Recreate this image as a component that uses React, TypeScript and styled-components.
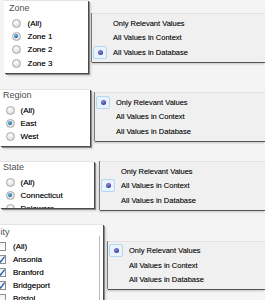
import styled, { createGlobalStyle } from "styled-components";

type FilterKind = "radio" | "check";

interface FilterRow {
  gap: number;
  title: string;
  kind: FilterKind;
  items: { label: string; on: boolean }[];
  cardWidth: number;
  cardShift: number;
  cardHeight?: number;
  padTop: number;
  padLeft: number;
  indent: number;
  itemGap: number;
  itemHeight: number;
  scroll?: boolean;
  menuGap: number;
  menuTop: number;
  selected: number;
}

const menuOptions = ["Only Relevant Values", "All Values in Context", "All Values in Database"];

const rows: FilterRow[] = [
  {
    gap: 0,
    title: "Zone",
    kind: "radio",
    items: [
      { label: "(All)", on: false },
      { label: "Zone 1", on: true },
      { label: "Zone 2", on: false },
      { label: "Zone 3", on: false },
    ],
    cardWidth: 84,
    cardShift: 4,
    padTop: 2,
    padLeft: 5,
    indent: 7.5,
    itemGap: 7,
    itemHeight: 13.3,
    menuGap: 4,
    menuTop: 13,
    selected: 2,
  },
  {
    gap: 16,
    title: "Region",
    kind: "radio",
    items: [
      { label: "(All)", on: false },
      { label: "East", on: true },
      { label: "West", on: false },
    ],
    cardWidth: 90,
    cardShift: 0,
    padTop: 0,
    padLeft: 3,
    indent: 5.5,
    itemGap: 6,
    itemHeight: 13,
    menuGap: 5,
    menuTop: 3,
    selected: 0,
  },
  {
    gap: 15,
    title: "State",
    kind: "radio",
    items: [
      { label: "(All)", on: false },
      { label: "Connecticut", on: true },
      { label: "Delaware", on: false },
    ],
    cardWidth: 94,
    cardShift: 0,
    cardHeight: 47,
    padTop: 0,
    padLeft: 3,
    indent: 5.5,
    itemGap: 6,
    itemHeight: 13,
    menuGap: 6,
    menuTop: 0,
    selected: 1,
  },
  {
    gap: 14,
    title: "City",
    kind: "check",
    items: [
      { label: "(All)", on: false },
      { label: "Ansonia", on: true },
      { label: "Branford", on: true },
      { label: "Bridgeport", on: true },
      { label: "Bristol", on: false },
    ],
    cardWidth: 112,
    cardShift: -9,
    cardHeight: 90,
    padTop: 2,
    padLeft: 3,
    indent: 6,
    itemGap: 7,
    itemHeight: 13,
    scroll: true,
    menuGap: 5,
    menuTop: 17,
    selected: 0,
  },
];

export default function App() {
  return (
    <>
      <GlobalStyle />
      <Page>
        {rows.map((row) => (
          <Row key={row.title} $gap={row.gap}>
            <Card $width={row.cardWidth} $shift={row.cardShift} $height={row.cardHeight} $padTop={row.padTop}>
              <CardBody>
                <CardTitle $padLeft={row.padLeft}>{row.title}</CardTitle>
                {row.items.map((item) => (
                  <Item key={item.label} $indent={row.indent} $gap={row.itemGap} $height={row.itemHeight}>
                    {row.kind === "radio" ? (
                      <Radio $on={item.on} />
                    ) : (
                      <Check>
                        {item.on && (
                          <svg width="9" height="9" viewBox="0 0 9 9">
                            <path d="M1.5 4.8 L3.6 7 L7.6 1.6" fill="none" stroke="#2a5fb8" strokeWidth="1.4" />
                          </svg>
                        )}
                      </Check>
                    )}
                    <ItemLabel>{item.label}</ItemLabel>
                  </Item>
                ))}
              </CardBody>
              {row.scroll && <ScrollTrack />}
            </Card>
            <Menu $gap={row.menuGap} $top={row.menuTop}>
              {menuOptions.map((opt, i) => (
                <MenuItem key={opt}>
                  <Marker $on={i === row.selected}>{i === row.selected && <Dot />}</Marker>
                  <MenuLabel>{opt}</MenuLabel>
                </MenuItem>
              ))}
            </Menu>
          </Row>
        ))}
      </Page>
    </>
  );
}

const GlobalStyle = createGlobalStyle`
  html, body {
    margin: 0;
    padding: 0;
    background: #f4f4f4;
  }
  body {
    font-family: "Liberation Sans", Arial, sans-serif;
    overflow: hidden;
  }
`;

const Page = styled.div`
  width: 265px;
  height: 300px;
  overflow: hidden;
  display: flex;
  flex-direction: column;
`;

const Row = styled.div<{ $gap: number }>`
  display: flex;
  align-items: flex-start;
  flex-shrink: 0;
  margin-top: ${(p) => p.$gap}px;
`;

const Card = styled.div<{ $width: number; $shift: number; $height?: number; $padTop: number }>`
  display: flex;
  flex-shrink: 0;
  box-sizing: border-box;
  width: ${(p) => p.$width}px;
  margin-left: ${(p) => p.$shift}px;
  height: ${(p) => (p.$height ? `${p.$height}px` : "auto")};
  padding: ${(p) => p.$padTop}px 0 3.5px;
  overflow: hidden;
  background: #fff;
  border-top: 1px solid #e4e4e4;
  box-shadow: 1px 1px 0 #4a4a4a, 2px 2px 0 #8a8a8a, 3px 3px 2px rgba(0, 0, 0, 0.15);
`;

const CardBody = styled.div`
  flex: 1;
  min-width: 0;
`;

const CardTitle = styled.div<{ $padLeft: number }>`
  height: 11px;
  line-height: 11px;
  margin-bottom: 2.5px;
  padding-left: ${(p) => p.$padLeft}px;
  font-size: 9px;
  color: #505050;
  white-space: nowrap;
`;

const Item = styled.div<{ $indent: number; $gap: number; $height: number }>`
  display: flex;
  align-items: center;
  gap: ${(p) => p.$gap}px;
  height: ${(p) => p.$height}px;
  padding-left: ${(p) => p.$indent}px;
  white-space: nowrap;
`;

const ItemLabel = styled.span`
  font-size: 8px;
  color: #111;
  text-shadow: 0 0 0.4px rgba(0, 0, 0, 0.6);
`;

const Radio = styled.span<{ $on: boolean }>`
  position: relative;
  flex-shrink: 0;
  box-sizing: border-box;
  width: 9px;
  height: 9px;
  border-radius: 50%;
  border: 1px solid #a8a8a8;
  background: radial-gradient(circle at 40% 35%, #ffffff 0%, #e4e4e4 55%, #cdcdcd 100%);

  &::after {
    content: "";
    display: ${(p) => (p.$on ? "block" : "none")};
    position: absolute;
    left: 1.5px;
    top: 1.5px;
    width: 4px;
    height: 4px;
    border-radius: 50%;
    background: radial-gradient(circle at 40% 35%, #6cc4f0 0%, #1f6ba8 60%, #123f70 100%);
  }
`;

const Check = styled.span`
  display: flex;
  flex-shrink: 0;
  box-sizing: border-box;
  width: 9px;
  height: 9px;
  border: 1px solid #8e8e8e;
  background: linear-gradient(#f2f2f2, #ffffff);
  align-items: center;
  justify-content: center;

  svg {
    margin: -1px;
  }
`;

const ScrollTrack = styled.div`
  flex-shrink: 0;
  width: 3px;
  align-self: stretch;
  margin-top: 9px;
  margin-bottom: -4px;
  border-left: 1px solid #b8b8b8;
  background: #fff;
`;

const Menu = styled.div<{ $gap: number; $top: number }>`
  flex: 1;
  min-width: 0;
  margin-left: ${(p) => p.$gap}px;
  margin-top: ${(p) => p.$top}px;
  padding: 2px 0;
  background: #f0f0f0;
  border-top: 1px solid #e2e2e2;
  box-shadow: -1px 0 0 #7a7a7a, 0 1px 0 #555, -1px 2px 2px rgba(0, 0, 0, 0.2);
`;

const MenuItem = styled.div`
  display: flex;
  align-items: center;
  gap: 6px;
  height: 14.5px;
  padding-left: 1px;
  white-space: nowrap;
`;

const Marker = styled.span<{ $on: boolean }>`
  display: flex;
  align-items: center;
  justify-content: center;
  box-sizing: border-box;
  width: 14px;
  height: 13px;
  border-radius: 2px;
  border: 1px solid ${(p) => (p.$on ? "#b4d6ee" : "transparent")};
  background: ${(p) => (p.$on ? "#e9f3fb" : "transparent")};
`;

const Dot = styled.span`
  width: 5px;
  height: 5px;
  border-radius: 50%;
  background: radial-gradient(circle at 40% 35%, #8f8fd8 0%, #3c3c9c 70%);
`;

const MenuLabel = styled.span`
  font-size: 7.5px;
  color: #1a1a1a;
  text-shadow: 0 0 0.4px rgba(0, 0, 0, 0.5);
`;
